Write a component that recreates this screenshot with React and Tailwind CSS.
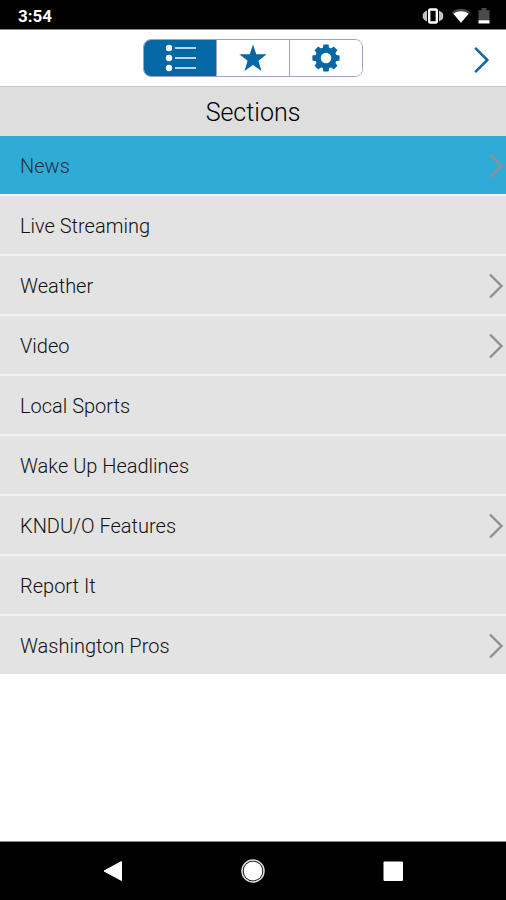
import React, { useState } from "react";

const SECTIONS = [
  { name: "News", more: true },
  { name: "Live Streaming" },
  { name: "Weather", more: true },
  { name: "Video", more: true },
  { name: "Local Sports" },
  { name: "Wake Up Headlines" },
  { name: "KNDU/O Features", more: true },
  { name: "Report It" },
  { name: "Washington Pros", more: true },
];

const TOOTH_ANGLES = [0, 45, 90, 135, 180, 225, 270, 315];

function StatusBar() {
  return (
    <div className="flex h-[30px] shrink-0 items-center justify-between border-b border-[#8a8a8a] bg-black pl-[18px] pr-4 pt-[2px] text-white">
      <span className="text-[17px] leading-5 font-bold">3:54</span>
      <div className="flex items-center gap-[7px]">
        <svg className="h-4 w-[22px]" viewBox="0 0 22 16" aria-label="Vibrate">
          <path d="M5 2.500L2.500 4L.8 6V10L2.500 12L5 13.500zM17 2.500L19.500 4L21.200 6V10L19.500 12L17 13.500z" fill="#c4c4c4" />
          <rect x="7.200" y="1.500" width="7.600" height="13" rx="1" fill="none" stroke="#fff" strokeWidth="2.400" />
        </svg>
        <svg className="h-4 w-5" viewBox="0 0 20 16" aria-label="Wi-Fi">
          <path d="M.8 4.200C6-.4 14-.4 19.200 4.200L10 14.800z" fill="#4a4a4a" />
          <path d="M2.400 5.800C7 2.500 13 2.500 17.600 5.800L10 14.800z" fill="#fff" />
        </svg>
        <svg className="h-4 w-3" viewBox="0 0 12 16" aria-label="Battery">
          <path d="M.5 2.200H3.500V0H8.500V2.200H11.500V12H.5z" fill="#4a4a4a" />
          <path d="M.5 12.200h11V15.500H.5z" fill="#fff" />
        </svg>
      </div>
    </div>
  );
}

function ListIcon() {
  return (
    <svg className="h-7 w-8" viewBox="0 0 32 28" aria-hidden="true">
      {[4, 14, 24].map((y) => (
        <g key={y}>
          <circle cx="5" cy={y} r="3.2" fill="#fff" />
          <path d={`M11 ${y}H32`} stroke="#b5d7ea" strokeWidth="2" />
        </g>
      ))}
    </svg>
  );
}

function StarIcon() {
  return (
    <svg className="h-7 w-7" viewBox="0 0 28 28" aria-hidden="true">
      <path d="M14 .5L17.300 10.300H27.700L19.400 16.800L22.500 27L14 21L5.500 27L8.600 16.800L.3 10.300H10.700z" fill="#0568a4" />
    </svg>
  );
}

function GearIcon() {
  return (
    <svg className="h-7 w-7" viewBox="-14 -14 28 28" aria-hidden="true">
      <circle r="8" fill="none" stroke="#0568a4" strokeWidth="5.400" />
      {TOOTH_ANGLES.map((angle) => (
        <path key={angle} d="M-3.200 -9L-2.600 -13.600H2.600L3.200 -9z" fill="#0568a4" transform={`rotate(${angle})`} />
      ))}
    </svg>
  );
}

function Chevron({ className }) {
  return (
    <svg className={className} viewBox="0 0 16 28" fill="none" stroke="currentColor" strokeWidth="2.400" aria-hidden="true">
      <path d="M2 2.500L13.500 14L2 25.500" />
    </svg>
  );
}

const TABS = [
  { id: "sections", label: "Sections", Icon: ListIcon },
  { id: "favorites", label: "Favorites", Icon: StarIcon },
  { id: "settings", label: "Settings", Icon: GearIcon },
];

function Header() {
  const [tab, setTab] = useState("sections");
  return (
    <header className="grid h-[57px] shrink-0 grid-cols-[1fr_auto_1fr] items-center border-b border-[#c4c4c4] bg-white">
      <div className="col-start-2 flex h-[38px] w-[220px] divide-x divide-[#9aa3c8] overflow-hidden rounded-lg border border-[#9aa3c8]">
        {TABS.map(({ id, label, Icon }) => (
          <button
            key={id}
            type="button"
            aria-label={label}
            aria-pressed={tab === id}
            onClick={() => setTab(id)}
            className={`flex flex-1 items-center justify-center ${tab === id ? "bg-[#0568a4]" : "bg-white"}`}
          >
            <Icon />
          </button>
        ))}
      </div>
      <button type="button" aria-label="Close menu" className="mr-4 mt-1 justify-self-end text-[#1268a8]">
        <Chevron className="h-[30px] w-[17px]" />
      </button>
    </header>
  );
}

function NavBar() {
  return (
    <nav className="grid h-[59px] shrink-0 grid-cols-[1fr_140px_1fr] items-center border-t border-[#8a8a8a] bg-black">
      <button type="button" aria-label="Back" className="mr-[58px] justify-self-end">
        <svg className="h-6 w-6" viewBox="0 0 24 24">
          <path d="M3 12L20.500 2.500V21.500z" fill="#fff" stroke="#fff" strokeLinejoin="round" />
        </svg>
      </button>
      <button type="button" aria-label="Home" className="justify-self-center">
        <svg className="h-6 w-6" viewBox="0 0 24 24">
          <circle cx="12" cy="12" r="11" fill="none" stroke="#dedede" strokeWidth="1.500" />
          <circle cx="12" cy="12" r="9.400" fill="#fff" />
        </svg>
      </button>
      <button type="button" aria-label="Recent apps" className="ml-[58px] justify-self-start">
        <svg className="h-6 w-6" viewBox="0 0 24 24">
          <rect x="2.500" y="2.500" width="19.500" height="19.500" rx="1" fill="#fff" />
        </svg>
      </button>
    </nav>
  );
}

export default function App() {
  const [active, setActive] = useState("News");
  return (
    <div className="flex min-h-screen flex-col bg-white font-[Roboto,sans-serif]">
      <StatusBar />
      <Header />
      <main className="flex-1">
        <h1 className="flex h-[49px] items-center justify-center bg-[#dedede] pt-[2px] text-[25px] font-light text-black">Sections</h1>
        <ul className="divide-y-2 divide-[#f1f1f1]">
          {SECTIONS.map(({ name, more }) => (
            <li key={name}>
              <button
                type="button"
                onClick={() => setActive(name)}
                className={`flex h-[58px] w-full items-center justify-between pl-5 pr-[2px] pt-[2px] text-left text-xl font-light ${
                  active === name ? "bg-[#30aad6] text-[#263238]" : "bg-[#e3e3e3] text-[#111111]"
                }`}
              >
                {name}
                {more && <Chevron className="h-7 w-4 text-[#909090]" />}
              </button>
            </li>
          ))}
        </ul>
      </main>
      <NavBar />
    </div>
  );
}
